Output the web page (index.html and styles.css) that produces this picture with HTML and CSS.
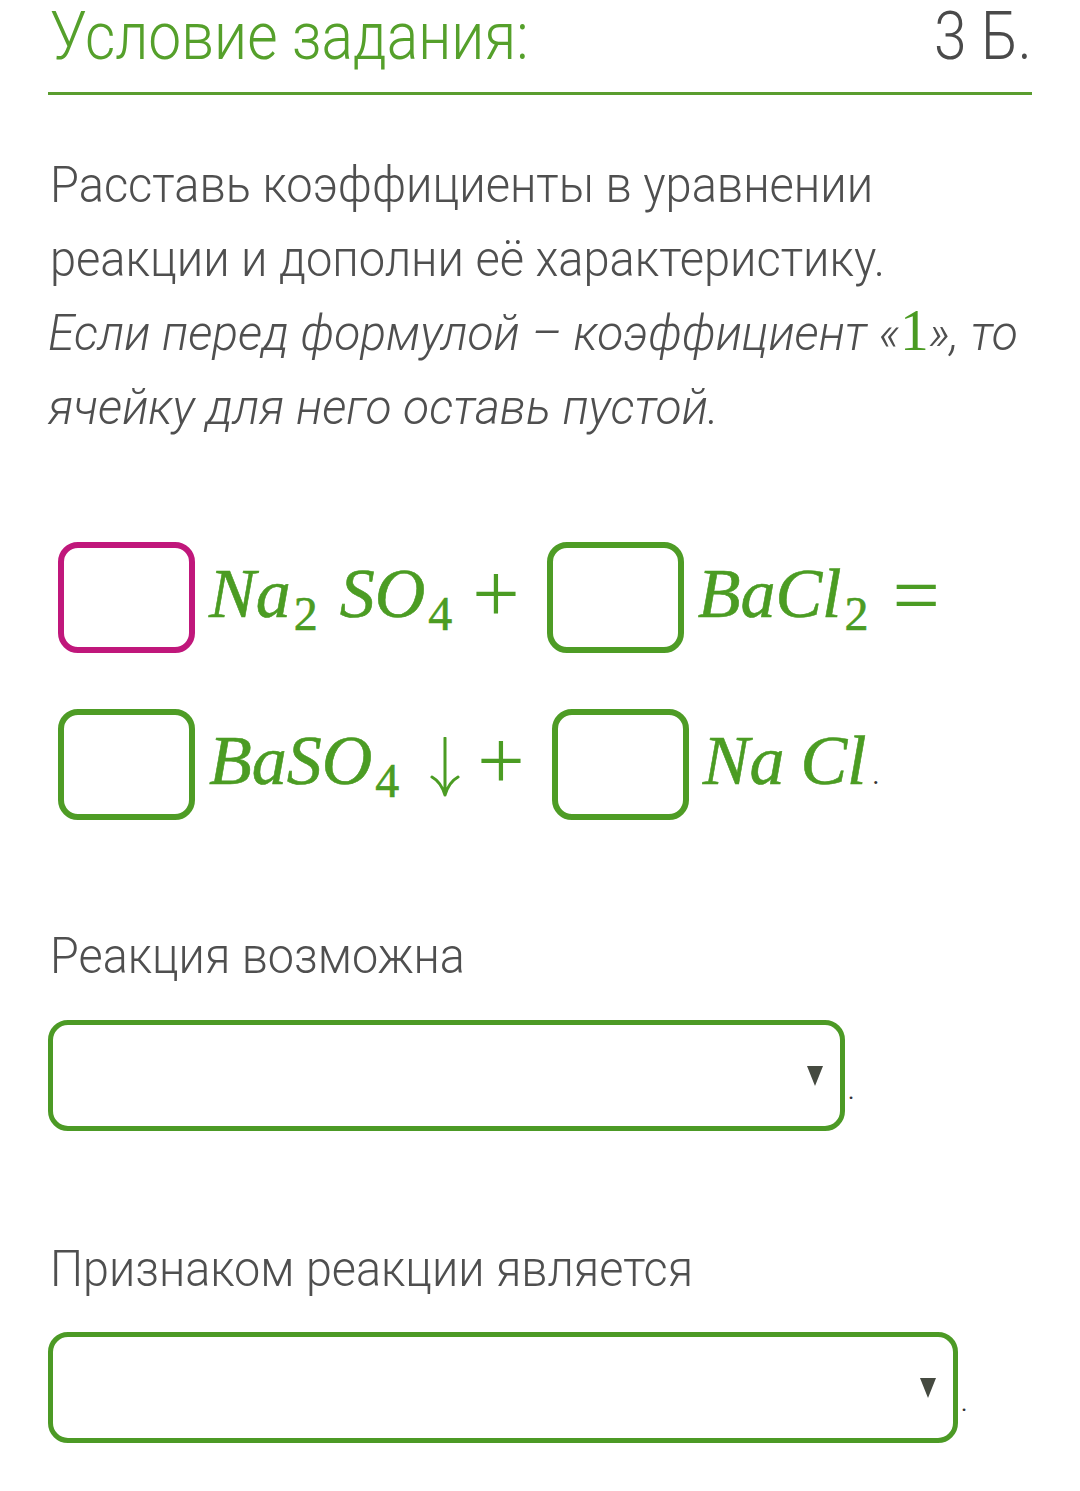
FILE: index.html
```html
<!DOCTYPE html>
<html lang="ru">
<head>
<meta charset="utf-8">
<link rel="stylesheet" href="styles.css">
</head>
<body>
<div class="page">
  <div class="header">
    <span class="title">Условие задания:</span>
    <span class="points">3 Б.</span>
  </div>
  <div class="task">
    <div class="line">Расставь коэффициенты в уравнении</div>
    <div class="line">реакции и дополни её характеристику.</div>
    <div class="line it">Если перед формулой – коэффициент «<span class="one">1</span>», то</div>
    <div class="line it">ячейку для него оставь пустой.</div>
  </div>

  <div class="eq-row first">
    <span class="cell active"></span>
    <span class="math"><i>Na</i><sub>2</sub><span class="sp"></span><i>SO</i><sub>4</sub><span class="op">+</span></span>
    <span class="cell"></span>
    <span class="math"><i>BaCl</i><sub>2</sub><span class="op eq">=</span></span>
  </div>
  <div class="eq-row second">
    <span class="cell"></span>
    <span class="math"><i>BaSO</i><sub>4</sub><svg class="arrow" width="32" height="60" viewBox="0 0 32 60" aria-label="↓"><path d="M16 1 V58 M3 40 Q12 45 16 58 Q20 45 29 40" fill="none" stroke="#4b9c23" stroke-width="3" stroke-linecap="round" stroke-linejoin="round"/></svg><span class="op op2">+</span></span>
    <span class="cell"></span>
    <span class="math"><i>Na</i><span class="sp2"></span><i>Cl</i><span class="dot">.</span></span>
  </div>

  <div class="label label-1"><span class="sq">Реакция возможна</span></div>
  <div class="select-row">
    <div class="select s1"><span class="tri"></span></div><span class="end">.</span>
  </div>

  <div class="label label-2"><span class="sq">Признаком реакции является</span></div>
  <div class="select-row">
    <div class="select s2"><span class="tri"></span></div><span class="end">.</span>
  </div>
</div>
</body>
</html>
```

FILE: styles.css
```css
html, body {
  margin: 0;
  padding: 0;
  background: #ffffff;
}
.page {
  padding: 0 48px;
  font-family: Roboto, "Noto Sans", sans-serif;
  color: #4f4f4f;
}
.header {
  display: flex;
  justify-content: space-between;
  align-items: flex-start;
  height: 92px;
  border-bottom: 3px solid #5a9d2f;
}
.title {
  display: inline-block;
  color: #55a02b;
  font-size: 66px;
  line-height: 74px;
  font-weight: 300;
  margin-left: 2px;
  transform: scaleX(0.89);
  transform-origin: left center;
  white-space: nowrap;
}
.points {
  display: inline-block;
  color: #4a4a4a;
  font-size: 66px;
  line-height: 74px;
  font-weight: 300;
  transform: scaleX(0.89);
  transform-origin: right center;
  white-space: nowrap;
}
.task {
  margin-top: 53px;
  font-size: 50px;
  line-height: 74px;
  font-weight: 300;
}
.line {
  white-space: nowrap;
  margin-left: 2px;
  transform: scaleX(0.94);
  transform-origin: left center;
}
.line.it {
  font-style: italic;
  margin-left: 0;
  transform: scaleX(0.96);
}
.one {
  font-family: "Liberation Serif", serif;
  font-style: normal;
  color: #4a9a22;
  font-size: 60px;
  line-height: 0;
}
.eq-row {
  display: flex;
  align-items: center;
  margin-left: 10px;
  height: 111px;
}
.eq-row.first { margin-top: 98px; }
.eq-row.second { margin-top: 56px; }
.cell {
  box-sizing: border-box;
  width: 137px;
  height: 111px;
  border: 6px solid #4e9c25;
  border-radius: 20px;
  flex: none;
}
.cell.active {
  border-color: #c0177b;
}
.math {
  font-family: "Liberation Serif", serif;
  color: #4b9c23;
  font-size: 70px;
  line-height: 80px;
  margin-left: 14px;
  margin-right: 27px;
  margin-bottom: 7px;
  white-space: nowrap;
  -webkit-text-stroke: 0.6px #4b9c23;
}
.math i { font-style: italic; }
.math sub {
  font-size: 48px;
  vertical-align: -13px;
  line-height: 0;
  margin-left: 3px;
}
.sp { width: 22px; display: inline-block; }
.sp2 { width: 16px; display: inline-block; }
.op {
  margin-left: 20px;
  font-size: 84px;
  line-height: 0;
  vertical-align: -5px;
  -webkit-text-stroke: 0;
}
.op.eq { margin-left: 24px; vertical-align: -7px; }
.arrow {
  margin-left: 30px;
  vertical-align: -13px;
}
.op.op2 {
  margin-left: 16px;
}
.dot {
  font-size: 26px;
  line-height: 0;
  color: #333;
  margin-left: 6px;
  -webkit-text-stroke: 0;
}
.label {
  font-size: 50px;
  font-weight: 300;
  line-height: 60px;
  white-space: nowrap;
}
.sq {
  display: inline-block;
  margin-left: 2px;
  transform: scaleX(0.935);
  transform-origin: left center;
}
.label-1 { margin-top: 106px; }
.label-2 { margin-top: 108px; }
.select-row {
  display: flex;
  align-items: center;
  margin-top: 34px;
}
.label-2 + .select-row { margin-top: 33px; }
.select {
  box-sizing: border-box;
  height: 111px;
  border: 5px solid #4c9a25;
  border-radius: 20px;
  position: relative;
  flex: none;
}
.s1 { width: 797px; }
.s2 { width: 910px; }
.tri {
  position: absolute;
  right: 17px;
  top: 41px;
  width: 0;
  height: 0;
  border-left: 8px solid transparent;
  border-right: 8px solid transparent;
  border-top: 20px solid #454a40;
}
.end {
  font-size: 24px;
  color: #333;
  margin-left: 3px;
  margin-top: 30px;
}
```
